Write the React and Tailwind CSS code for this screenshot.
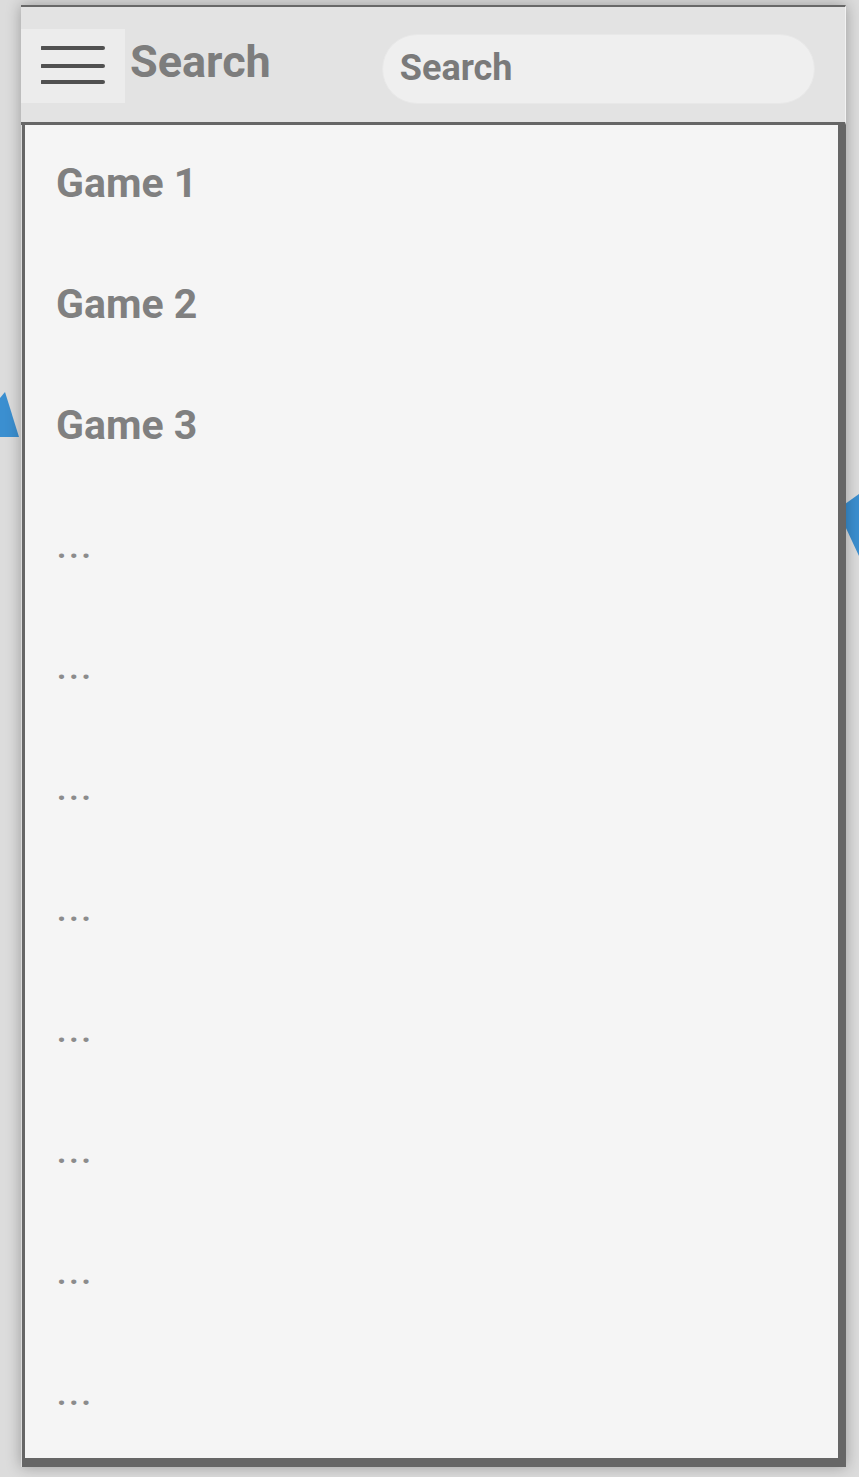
import React from 'react';

const games = ['Game 1', 'Game 2', 'Game 3'];
const more = [1, 2, 3, 4, 5, 6, 7, 8];

function Hamburger() {
  return (
    <svg width="64" height="40" viewBox="0 0 64 40" className="block">
      <line x1="1" y1="2" x2="62" y2="2" stroke="#505050" strokeWidth="4" strokeLinecap="round" />
      <line x1="1" y1="20" x2="62" y2="20" stroke="#505050" strokeWidth="4" strokeLinecap="round" />
      <line x1="1" y1="36" x2="62" y2="36" stroke="#505050" strokeWidth="4" strokeLinecap="round" />
    </svg>
  );
}

export default function App() {
  return (
    <div
      className="relative w-[859px] h-[1477px] overflow-hidden bg-[#dcdcdc] pt-[5px] pl-[21px]"
      style={{ fontFamily: 'Roboto, "Liberation Sans", sans-serif' }}
    >
      {/* arrow pieces peeking out behind the frame */}
      <svg className="absolute left-0 top-[392px]" width="20" height="48" viewBox="0 0 20 48">
        <polygon points="0,6 5,0 19,45 0,45" fill="#3b8fd0" />
      </svg>
      <svg className="absolute right-0 top-[494px]" width="14" height="64" viewBox="0 0 14 64">
        <polygon points="0,10 14,0 14,62 0,32" fill="#3b8fd0" />
      </svg>

      <div className="relative z-10 flex flex-col w-[825px] h-[1462px] shadow-[0_0_14px_rgba(0,0,0,0.3)]">
        <header className="flex items-start h-[120px] bg-[#e3e3e3] border-t-2 border-b-[3px] border-r border-t-[#686868] border-b-[#666] border-r-[#f2f2f2]">
          <button className="flex items-center justify-center mt-[22px] w-[104px] h-[74px] bg-[#ececec]">
            <Hamburger />
          </button>
          <h1 className="ml-[5px] mt-[29px] text-[45px] leading-[52px] font-bold text-[#7d7d7d]">Search</h1>
          <div className="ml-[111px] mt-[27px] flex items-center w-[433px] h-[70px] rounded-full bg-[#efefef] border border-[#e8e8e8] pl-[17px] pb-[3px]">
            <span className="text-[36px] font-bold text-[#7a7a7a] leading-none">Search</span>
          </div>
        </header>

        <main className="flex-1 ml-[1px] bg-[#f5f5f5] border-l-[3px] border-r-[8px] border-b-[9px] border-[#666] overflow-hidden">
          <ul className="-mt-[2px] pl-[31px]">
            {games.map((g) => (
              <li key={g} className="flex items-center h-[121px] text-[41px] font-bold text-[#808080]">
                {g}
              </li>
            ))}
            {more.map((n) => (
              <li key={n} className="flex items-center h-[121px] pl-[1px] text-[32px] font-bold tracking-[3px] text-[#8c8c8c]">
                ...
              </li>
            ))}
          </ul>
        </main>
      </div>
    </div>
  );
}
